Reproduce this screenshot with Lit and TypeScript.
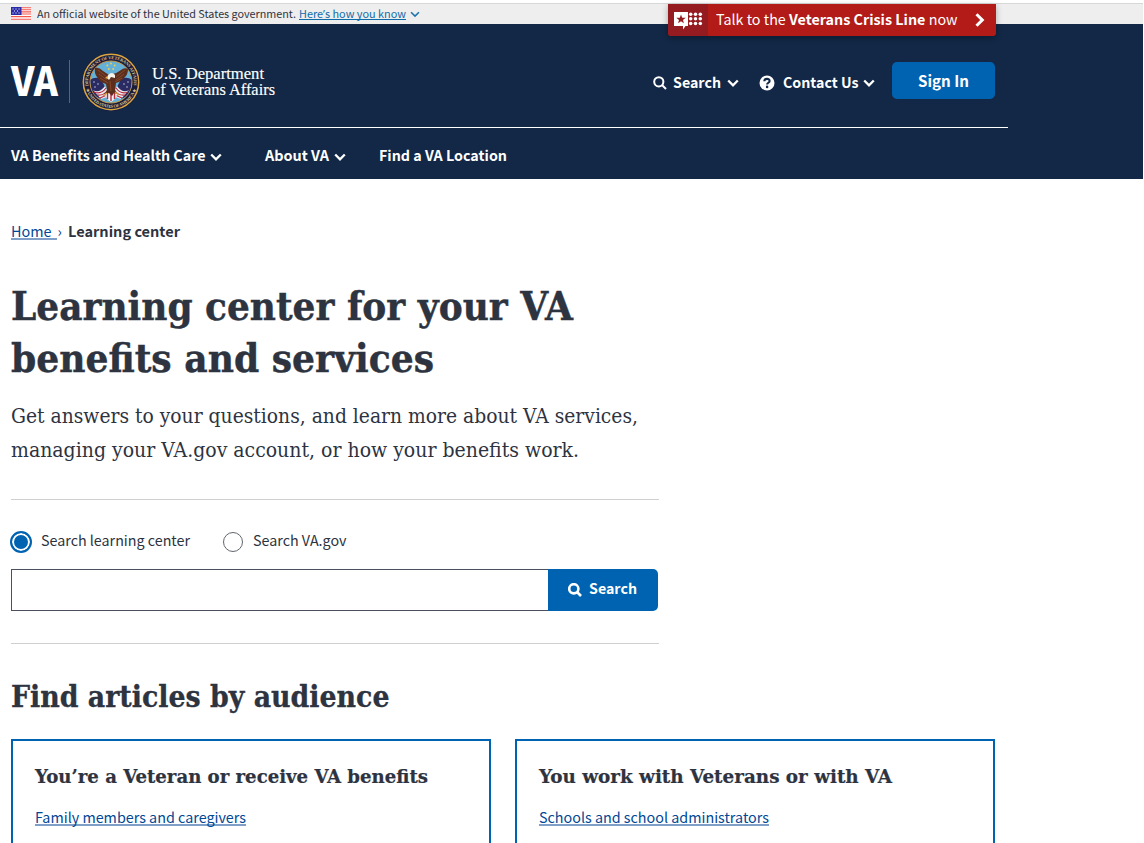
import { LitElement, html, css, svg } from "lit";
import { customElement, property, query, state } from "lit/decorators.js";
import { styleMap } from "lit/directives/style-map.js";

/** A single line of text set to a given measure. */
@customElement("fit-text")
class FitText extends LitElement {
  @property({ type: Number }) w = 0;
  @state() private ratio = 1;
  @query(".t") private line!: HTMLElement;

  static styles = css`
    :host { display: inline-block; white-space: nowrap; vertical-align: top; flex: none; }
    .t { display: inline-block; transform-origin: 0 50%; vertical-align: top; }
  `;

  firstUpdated() {
    const natural = this.line.offsetWidth ? this.line.getBoundingClientRect().width : 0;
    if (natural) this.ratio = this.w / natural;
    this.style.width = this.w + "px";
  }

  render() {
    return html`<span class="t" style=${styleMap({ transform: `scaleX(${this.ratio})` })}><slot></slot></span>`;
  }
}

const chevron = (w: number, h: number, sw: number) => svg`
  <svg class="icon" width=${w} height=${h} viewBox="0 0 11 8" fill="none" stroke="currentColor" stroke-width=${sw}>
    <path d="M1 1.4 L5.5 5.9 L10 1.4"/>
  </svg>`;

const magnifier = (sw: number) => svg`
  <svg class="icon" width="14" height="14" viewBox="0 0 14 14" fill="none" stroke="currentColor" stroke-width=${sw}>
    <circle cx="5.8" cy="5.8" r="4.6"/><path d="M9 9 L13 13"/>
  </svg>`;

@customElement("va-seal")
class VaSeal extends LitElement {
  static styles = css`
    :host { display: block; width: 58px; height: 58px; }
    svg { display: block; overflow: visible; }
    .ring { font: bold 4.4px "Liberation Serif", serif; fill: #d8c488; }
  `;
  render() {
    return html`<svg width="58" height="58" viewBox="0 0 58 58">
      <defs>
        <path id="top" d="M6.45 33 A22.9 22.9 0 1 1 51.55 33"/>
        <path id="bot" d="M4 35.7 A25.9 25.9 0 0 0 54 35.7"/>
        <clipPath id="disc"><circle cx="29" cy="29" r="20.6"/></clipPath>
      </defs>
      <circle cx="29" cy="29" r="28.9" fill="#131a48"/>
      <circle cx="29" cy="29" r="27.7" fill="#1d1b3c" stroke="#d9a640" stroke-width="1.5"/>
      <circle cx="29" cy="29" r="21" fill="#64b0d6" stroke="#c79b45" stroke-width="1"/>
      <text class="ring"><textPath href="#top" textLength="79">DEPARTMENT OF VETERANS AFFAIRS</textPath></text>
      <text class="ring"><textPath href="#bot" textLength="67">★ UNITED STATES OF AMERICA ★</textPath></text>
      <g clip-path="url(#disc)">
        <path d="M8 27 Q13 23 19 26 L25 38 L19 46 L10 42Z M50 27 Q45 23 39 26 L33 38 L39 46 L48 42Z" fill="#292b62"/>
        <g fill="#dbe1ef">
          <circle cx="12" cy="29" r=".7"/><circle cx="16" cy="31" r=".7"/><circle cx="13" cy="34" r=".7"/>
          <circle cx="46" cy="29" r=".7"/><circle cx="42" cy="31" r=".7"/><circle cx="45" cy="34" r=".7"/>
        </g>
        <path d="M11 37 Q17 41 23 33 L28 43 L19 46 Z M47 37 Q41 41 35 33 L30 43 L39 46 Z" fill="#eceaf0"/>
        <path d="M12 39 Q19 42 24 35 M15 42 Q21 43 25 38 M18 45 L27 41 M46 39 Q39 42 34 35 M43 42 Q37 43 33 38 M40 45 L31 41" stroke="#b6293d" stroke-width="1.1" fill="none"/>
        <path d="M23 38 H35 V42 Q33 47 29 49 Q25 47 23 42Z" fill="#f1eff1"/>
        <path d="M25.5 40 V46 M29 40 V48 M32.5 40 V46" stroke="#b62d40" stroke-width="1.4"/>
      </g>
      <path d="M13 15 Q17 14 21 18 Q24 20 27 22 L31 21 Q35 20 39 17 Q42 14 46 16 Q46 21 43 24 Q40 28 34 30 L33 37 L36 41 L32 40 L30 43 L27 40 L22 41 L25 37 L24 31 Q17 29 15 24 Q12 20 13 15Z" fill="#5b2e1e"/>
      <path d="M16 17 L25 24 M17 21 L25 27 M18 25 L26 30 M43 17 L34 24 M42 21 L34 27 M40 25 L33 29 M28 28 L29 38" stroke="#8c4b2b" stroke-width=".9"/>
      <path d="M26 22 Q30 18 33 22 L33 25 L29 24 L27 27 L25 25Z" fill="#f7f3e8"/>
      <path d="M25.5 23 L23 25 L26 26Z" fill="#e5b13e"/>
      <path d="M25 40 L21 43 M33 39 L37 42" stroke="#d49b36" stroke-width="1.2"/>
      <g fill="#e9cf57">
        <circle cx="29" cy="10.5" r="1"/><circle cx="25.3" cy="12.5" r="1"/><circle cx="32.7" cy="12.5" r="1"/>
        <circle cx="26.8" cy="16" r="1"/><circle cx="31.2" cy="16" r="1"/>
      </g>
    </svg>`;
  }
}

@customElement("app-root")
class AppRoot extends LitElement {
  static styles = css`
    :host {
      display: block; width: 1143px; height: 843px; overflow: hidden; background: #fff;
      box-sizing: border-box; color: #2d333f;
      font-family: "Noto Sans CJK SC", "Open Sans", sans-serif; font-size: 14.3px; line-height: 24px;
    }
    * { box-sizing: border-box; }
    h1, h2, h3, p { margin: 0; }
    .icon { display: block; flex: none; }
    .gov { margin-top: 3px; height: 21px; border-top: 1px solid #d6d7d9; background: #eee; display: flex;
      padding-left: 10.5px; font-size: 10.7px; line-height: 20px; position: relative; }
    .flag { display: block; margin: 3px 6.5px 0 0; }
    .gov .know { color: #0f6cab; margin: 0 4px 0 3px; height: 16px; border-bottom: 1px solid #0f6cab; }
    .apos { font-family: "Open Sans", sans-serif; line-height: 1; }
    .gov .icon { margin-top: 7px; color: #1c73ad; }
    .crisis { position: absolute; left: 667.5px; top: 0; width: 328px; height: 32px; display: flex; color: #fff;
      background: #b21b18; border-radius: 0 0 3px 3px; box-shadow: 0 2px 6px rgba(0,0,0,.3); overflow: hidden;
      font-size: 14.3px; line-height: 30px; }
    .crisis .mark { width: 40px; height: 32px; background: #941b20; padding: 8px 0 0 6.5px; margin-right: 8.5px; }
    .crisis .mark svg { display: block; }
    .crisis .go { margin: 9px 0 0 17.5px; }
    .head { height: 155px; background: #122846; color: #fff; font-weight: 700; }
    .brand { height: 104px; width: 1008px; border-bottom: 1px solid #fff; display: flex; padding: 0 13px 0 11px; }
    .va { font-size: 40px; font-weight: 900; line-height: 56px; margin-top: 27px; }
    .bar { width: 1px; height: 43px; background: #56657b; margin: 36px 12px 0 11px; }
    va-seal { margin-top: 28.5px; }
    .dept { font: 400 17.4px/16px "Liberation Serif", serif; margin: 41px 0 0 12px; display: flex; flex-direction: column;
      -webkit-text-stroke: .15px #fff; }
    .tools { margin-left: auto; display: flex; padding-top: 38px; line-height: 39px; }
    .tools .lens { margin: 14px 6px 0 0; }
    .tools .icon.help { margin: 13px 8px 0 -.5px; }
    .tools .chev { margin: 17px 0 0 5.5px; }
    .tools .search { display: flex; width: 106px; }
    .tools .contact { display: flex; width: 133px; }
    .tools .contact .chev { margin-left: 4.5px; }
    .sign { width: 103px; height: 37px; border-radius: 5px; background: #0063b1; font-size: 15.2px; line-height: 37px;
      text-align: center; color: #fff; }
    .menu { display: flex; height: 51px; padding-left: 10.5px; line-height: 53px; }
    .menu .chev { margin: 25px 0 0 5px; }
    .menu .item { display: flex; }
    .menu .a { width: 254px; }
    .menu .b { width: 114px; }
    main { padding-left: 11px; }
    .crumbs { display: flex; padding-top: 40px; color: #004795; }
    .link { color: #004795; display: inline-block; height: 24px; }
    .under { background: linear-gradient(#7f9fc8, #7f9fc8) 0 19px / 100% 2px no-repeat; }
    .home { width: 46px; }
    .sep { width: 10.5px; padding-left: .5px; }
    .here { font-weight: 700; color: #2d333f; }
    .serif { font-family: "DejaVu Serif Condensed", "DejaVu Serif", serif; }
    h1 { font-size: 38.5px; line-height: 52px; margin-top: 38px; display: flex; flex-direction: column;
      -webkit-text-stroke: .4px #2d333f; }
    .lead { font-size: 19.5px; line-height: 34px; margin-top: 15px; display: flex; flex-direction: column; }
    .find { width: 648px; height: 145px; margin-top: 31px; border-top: 1px solid #d0d0d0; border-bottom: 1px solid #d0d0d0; }
    .radios { display: flex; padding-top: 31px; margin-left: -1px; height: 69px; line-height: 18px; }
    .radio { width: 22px; height: 22px; border-radius: 50%; border: 2px solid #0063b1; background: #0063b1;
      box-shadow: inset 0 0 0 2px #fff; margin-right: 9px; }
    .radio.off { width: 20px; height: 20px; border: 1px solid #62666d; background: #fff; box-shadow: none; margin: 1px 10px 0 32.5px; }
    .bar-search { display: flex; width: 647px; height: 42px; }
    .field { width: 537px; border: 1px solid #4a515c; border-right: 0; background: #fff; padding: 0; border-radius: 0; outline: 0; }
    .submit { width: 110px; background: #0063b1; color: #fff; border-radius: 0 5px 5px 0; display: flex; font-weight: 700;
      line-height: 38px; padding-left: 20px; }
    .submit .icon { margin: 14px 7px 0 0; }
    h2 { font-size: 29px; line-height: 38px; margin-top: 34px; -webkit-text-stroke: .3px #2d333f; }
    .cards { display: flex; gap: 24px; margin-top: 23px; }
    .card { width: 480px; height: 140px; border: 2px solid #0063b1; padding: 23px 22px 0; }
    h3 { font-size: 19.3px; line-height: 26px; margin-bottom: 15px; -webkit-text-stroke: .2px #2d333f; }
  `;

  render() {
    return html`
      <div class="gov">
        <svg class="flag" width="20" height="13" viewBox="0 0 20 13">
          <rect width="20" height="13" fill="#fff"/>
          <path d="M0 .7H20M0 2.8H20M0 4.9H20M0 7H20M0 9.6H20M0 12.3H20" stroke="#f4574d" stroke-width="1.1"/>
          <rect width="10.5" height="8" fill="#2c2ca8"/>
          <g fill="#fff"><path d="M1.5 1.5h1v1h-1zM4.5 1.5h1v1h-1zM7.5 1.5h1v1h-1zM3 3.5h1v1H3zM6 3.5h1v1H6zM1.5 5.5h1v1h-1zM4.5 5.5h1v1h-1zM7.5 5.5h1v1h-1z"/></g>
        </svg>
        <fit-text w="259">An official website of the United States government.</fit-text>
        <a class="know"><fit-text w="107">Here<span class="apos">’</span>s how you know</fit-text></a>
        ${chevron(10, 7, 1.8)}
        <div class="crisis">
          <div class="mark">
            <svg width="29" height="18" viewBox="0 0 29 18" fill="#fff">
              <path d="M0 0H14V14H11.5L9 17.5V14H0Z"/>
              <path d="M7 2.4 L8.2 5.7 L11.7 5.8 L9 7.9 L9.9 11.2 L7 9.3 L4.1 11.2 L5 7.9 L2.3 5.8 L5.8 5.7Z" fill="#941b20"/>
              ${[16.7, 21.5, 26.3].map((x) => [2.2, 6.8, 11.5].map((y) => svg`<circle cx=${x} cy=${y} r="1.75"/>`))}
            </svg>
          </div>
          <fit-text w="241.5">Talk to the <b>Veterans Crisis Line</b> now</fit-text>
          <svg class="go" width="10" height="14" viewBox="0 0 10 14" fill="none" stroke="#fff" stroke-width="3"><path d="M1.5 1.2L7.3 7L1.5 12.8"/></svg>
        </div>
      </div>
      <header class="head">
        <div class="brand">
          <fit-text class="va" w="47">VA</fit-text>
          <div class="bar"></div>
          <va-seal></va-seal>
          <div class="dept"><fit-text w="112">U.S. Department</fit-text><fit-text w="123">of Veterans Affairs</fit-text></div>
          <div class="tools">
            <div class="search"><span class="lens">${magnifier(2)}</span><fit-text w="48">Search</fit-text><span class="chev">${chevron(12, 8.5, 2.2)}</span></div>
            <div class="contact">
              <svg class="icon help" width="16" height="16" viewBox="0 0 16 16"><circle cx="8" cy="8" r="7.5" fill="#fff"/>
                <path d="M5.3 6.2C5.5 3.1 10.6 3.1 10.6 6C10.6 7.8 8.1 7.7 8.1 9.5" fill="none" stroke="#122846" stroke-width="2.1"/><circle cx="8.1" cy="11.9" r="1.3" fill="#122846"/></svg>
              <fit-text w="75.5">Contact Us</fit-text><span class="chev">${chevron(12, 8.5, 2.2)}</span>
            </div>
            <div class="sign"><fit-text w="51">Sign In</fit-text></div>
          </div>
        </div>
        <nav class="menu">
          <div class="item a"><fit-text w="194.5">VA Benefits and Health Care</fit-text><span class="chev">${chevron(12, 8.5, 2.2)}</span></div>
          <div class="item b"><fit-text w="64">About VA</fit-text><span class="chev">${chevron(12, 8.5, 2.2)}</span></div>
          <fit-text w="128">Find a VA Location</fit-text>
        </nav>
      </header>
      <main>
        <nav class="crumbs">
          <a class="link under home"><fit-text w="40.5">Home</fit-text></a>
          <span class="sep">›</span>
          <fit-text class="here" w="112">Learning center</fit-text>
        </nav>
        <h1 class="serif"><fit-text w="562">Learning center for your VA</fit-text><fit-text w="423">benefits and services</fit-text></h1>
        <p class="lead serif">
          <fit-text w="627">Get answers to your questions, and learn more about VA services,</fit-text>
          <fit-text w="568">managing your VA.gov account, or how your benefits work.</fit-text>
        </p>
        <section class="find">
          <div class="radios">
            <span class="radio"></span><fit-text w="149">Search learning center</fit-text>
            <span class="radio off"></span><fit-text w="93.5">Search VA.gov</fit-text>
          </div>
          <div class="bar-search">
            <input class="field" aria-label="Search" />
            <div class="submit">${magnifier(2.6)}<fit-text w="48">Search</fit-text></div>
          </div>
        </section>
        <h2 class="serif"><fit-text w="378.5">Find articles by audience</fit-text></h2>
        <section class="cards">
          <article class="card">
            <h3 class="serif"><fit-text w="393">You’re a Veteran or receive VA benefits</fit-text></h3>
            <a class="link under"><fit-text w="211">Family members and caregivers</fit-text></a>
          </article>
          <article class="card">
            <h3 class="serif"><fit-text w="353">You work with Veterans or with VA</fit-text></h3>
            <a class="link under"><fit-text w="230">Schools and school administrators</fit-text></a>
          </article>
        </section>
      </main>
    `;
  }
}
